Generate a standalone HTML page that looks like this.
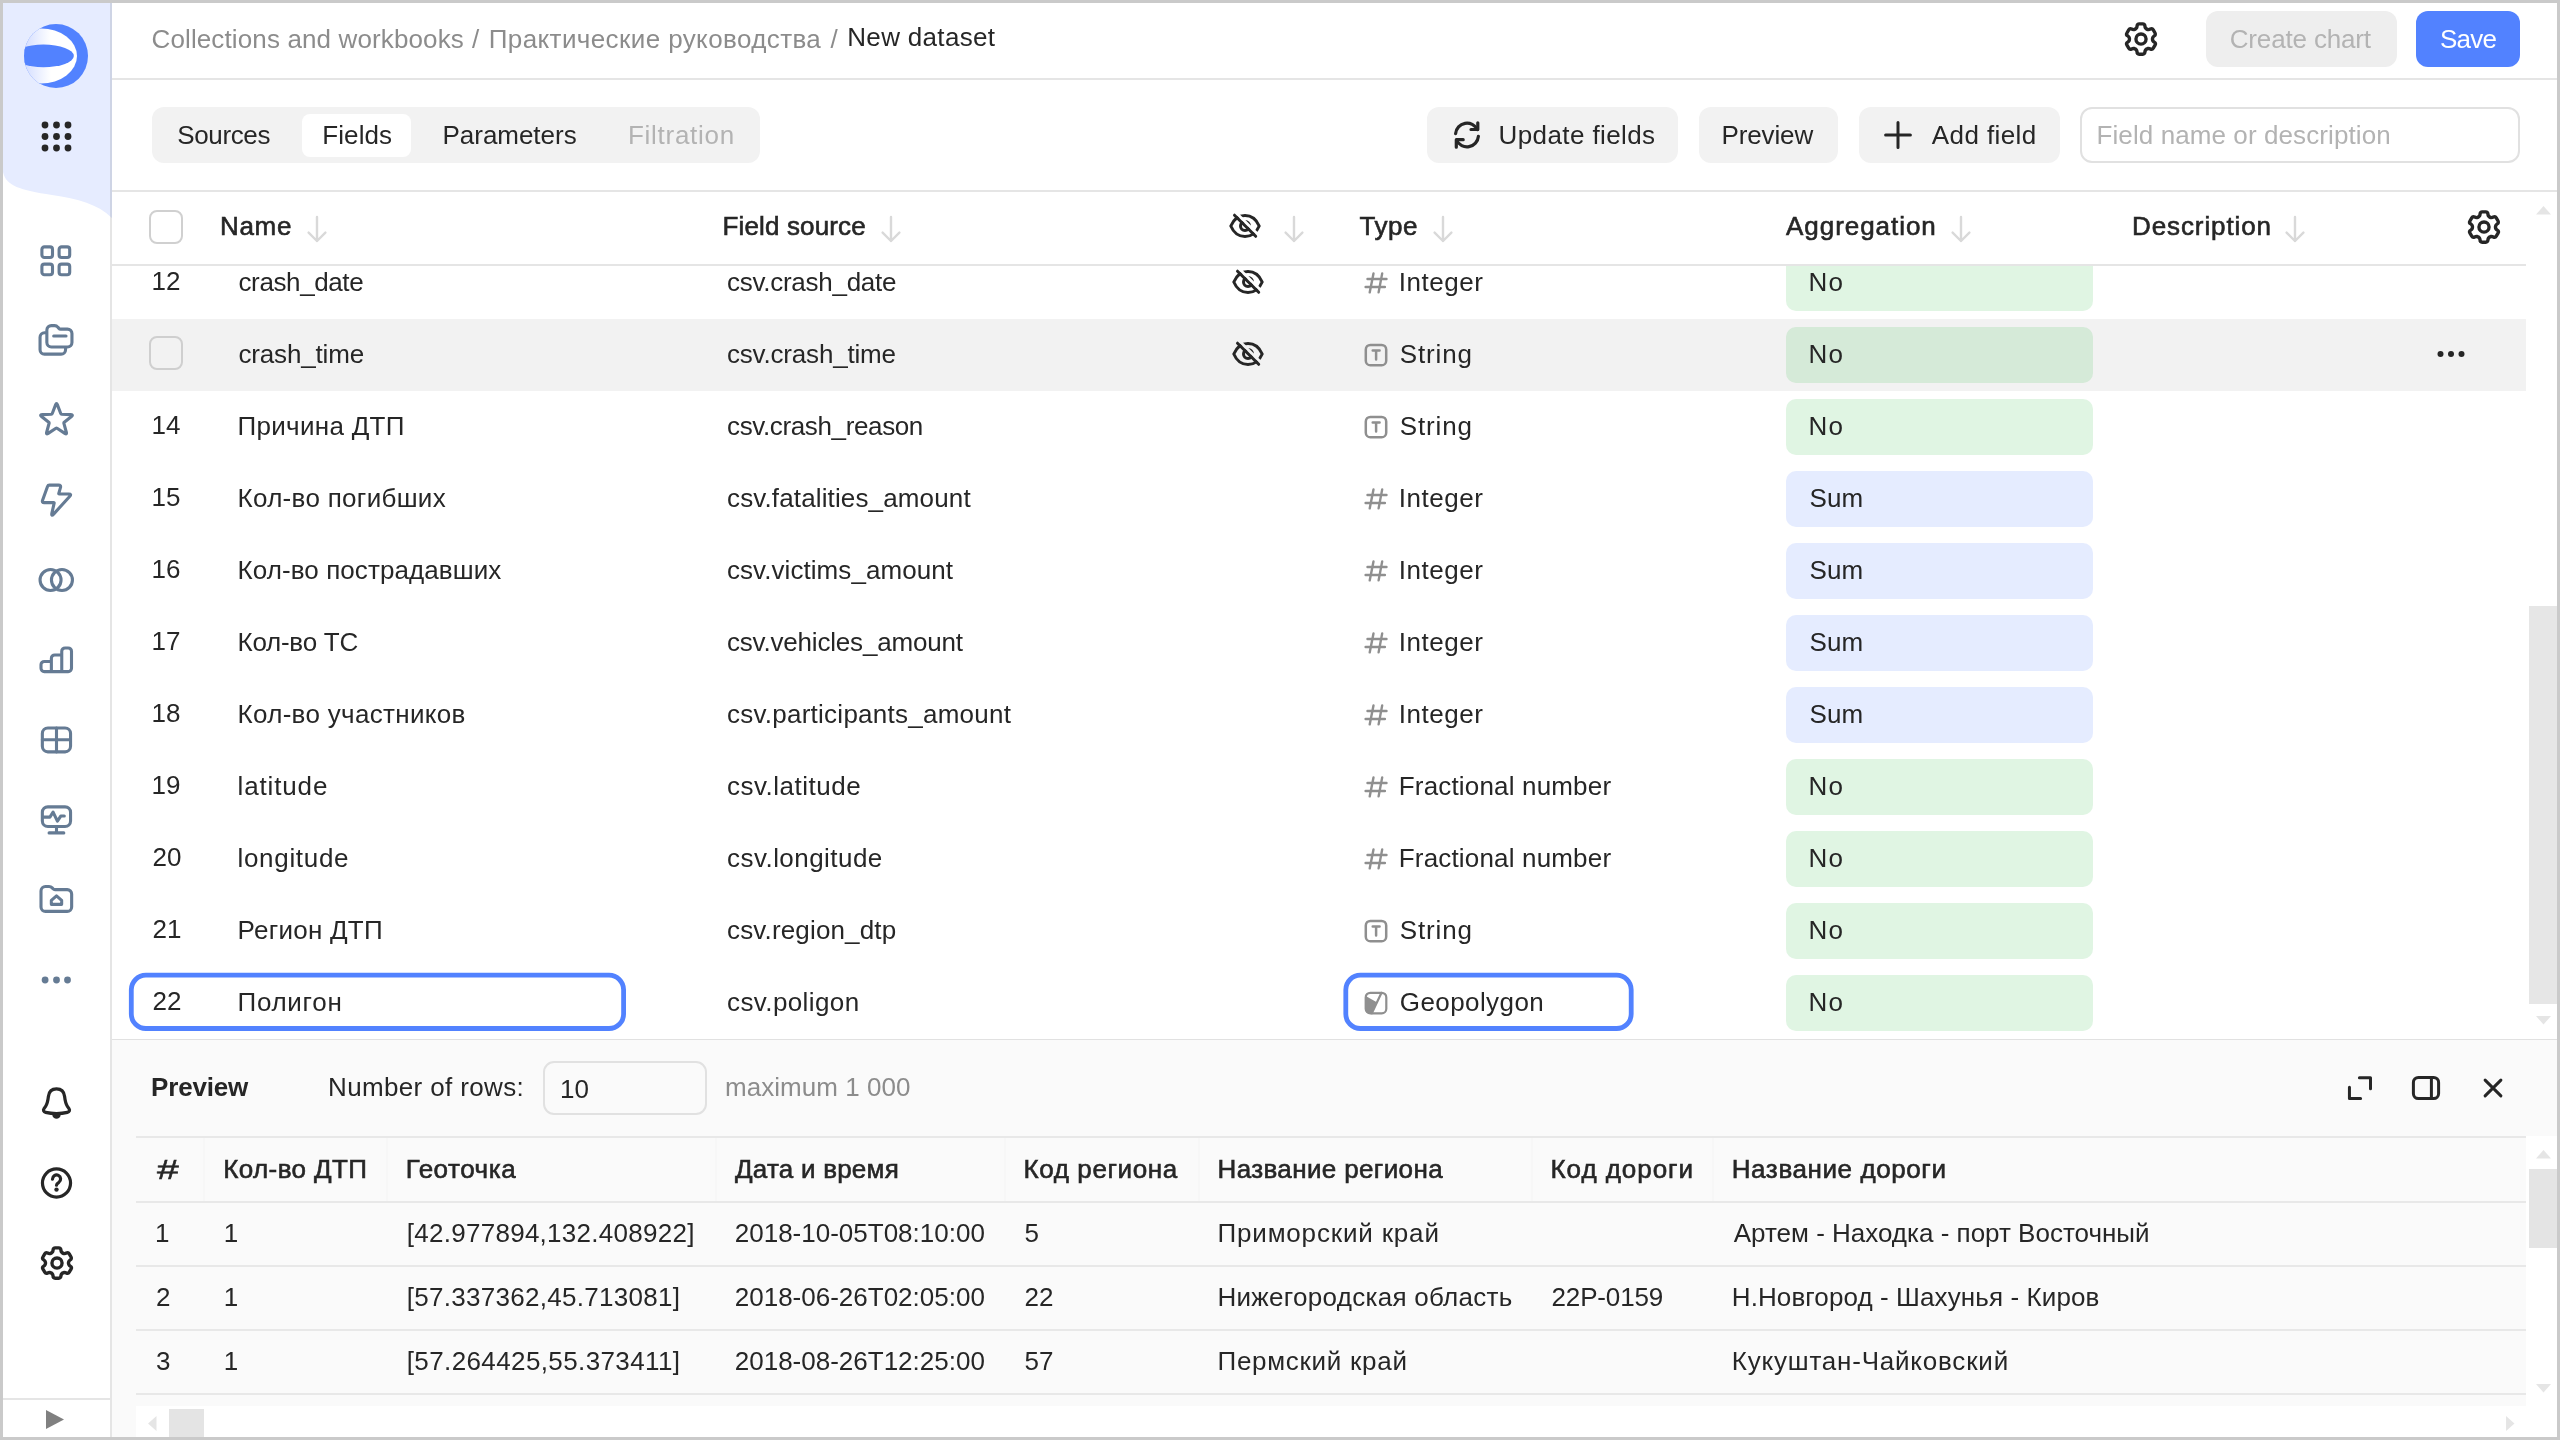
<!DOCTYPE html>
<html lang="en">
<head>
<meta charset="utf-8">
<title>New dataset</title>
<style>
html,body{margin:0;padding:0;}
body{width:2560px;height:1440px;position:relative;overflow:hidden;background:#fff;font-family:"Liberation Sans",sans-serif;font-size:26px;color:#262626;}
.t{position:absolute;white-space:pre;line-height:30px;font-size:26px;}
.abs{position:absolute;}
.ln{position:absolute;background:#e5e5e5;}
.btn{position:absolute;border-radius:12px;background:#f2f2f2;height:56px;top:107px;}
.ic{position:absolute;color:#262626;overflow:visible;}
.tic{color:#8f8f8f;}
.sic{position:absolute;left:40px;color:#6b8299;overflow:visible;}
.arr{position:absolute;top:213.400px;color:#d9d9d9;}
.cb{position:absolute;width:30px;height:30px;border:2px solid #d0d0d0;border-radius:8px;background:#fff;}
#tbody{will-change:transform;position:absolute;left:0;top:266px;width:2526px;height:773px;overflow:hidden;}
.hov{position:absolute;left:112px;width:2414px;height:72px;background:#f2f2f2;}
.pill{position:absolute;left:1786px;width:307px;height:56px;border-radius:10px;}
.pill.g{background:rgba(50,186,67,0.15);}
.pill.b{background:rgba(82,130,255,0.15);}
.focus{position:absolute;border:4px solid #5282ff;border-radius:14px;box-sizing:border-box;height:58px;top:973px;}
</style>
</head>
<body>
<svg width="0" height="0" style="position:absolute">
<defs>
<symbol id="i-gear" viewBox="0 0 16 16"><path fill="currentColor" fill-rule="evenodd" clip-rule="evenodd" d="M7.199 2H8.8a.2.2 0 0 1 .2.2c0 1.808 1.958 2.939 3.524 2.034a.199.199 0 0 1 .271.073l.802 1.388a.199.199 0 0 1-.073.272c-1.566.904-1.566 3.164 0 4.069a.199.199 0 0 1 .073.271l-.802 1.388a.199.199 0 0 1-.271.073C10.958 10.863 9 11.993 9 13.8a.2.2 0 0 1-.199.2H7.2a.199.199 0 0 1-.2-.2c0-1.808-1.958-2.938-3.524-2.034a.199.199 0 0 1-.272-.073l-.8-1.388a.199.199 0 0 1 .072-.271c1.566-.905 1.566-3.165 0-4.07a.199.199 0 0 1-.073-.271l.801-1.388a.199.199 0 0 1 .272-.073C5.042 5.138 7 4.007 7 2.2c0-.11.089-.199.199-.199ZM5.5 2.2c0-.94.76-1.7 1.699-1.7H8.8c.94 0 1.7.76 1.7 1.7a.85.85 0 0 0 1.274.735 1.699 1.699 0 0 1 2.32.622l.802 1.388c.469.813.19 1.851-.622 2.32a.85.85 0 0 0 0 1.472 1.7 1.7 0 0 1 .622 2.32l-.802 1.388a1.699 1.699 0 0 1-2.32.622.85.85 0 0 0-1.274.735c0 .939-.76 1.7-1.699 1.7H7.2a1.7 1.7 0 0 1-1.699-1.7.85.85 0 0 0-1.274-.735 1.698 1.698 0 0 1-2.32-.622l-.802-1.388a1.699 1.699 0 0 1 .622-2.32.85.85 0 0 0 0-1.471 1.699 1.699 0 0 1-.622-2.321l.801-1.388a1.699 1.699 0 0 1 2.32-.622A.85.85 0 0 0 5.5 2.2Zm4 5.8a1.5 1.5 0 1 1-3 0 1.5 1.5 0 0 1 3 0ZM11 8a3 3 0 1 1-6 0 3 3 0 0 1 6 0Z"/></symbol>
<symbol id="i-eyeslash" viewBox="0 0 16 16"><mask id="esm" maskUnits="userSpaceOnUse" x="-1" y="-1" width="18" height="18"><rect x="-1" y="-1" width="18" height="18" fill="#fff"/><path d="M1.800 -0.400 15.800 13.600" stroke="#000" stroke-width="1.400"/></mask><g fill="none" stroke="currentColor" stroke-width="1.500" stroke-linecap="butt" stroke-linejoin="round"><g mask="url(#esm)"><path d="M0.900 8C2.300 4.700 4.900 2.750 8 2.750S13.700 4.700 15.100 8C13.700 11.300 11.100 13.250 8 13.250S2.300 11.300 0.900 8Z"/><circle cx="8" cy="8" r="2.250"/></g><path d="M2.750 2.600 13.350 13.150" stroke-linecap="round"/></g></symbol>
<symbol id="i-dots" viewBox="0 0 16 16"><g fill="currentColor"><circle cx="2.75" cy="8" r="1.5"/><circle cx="8" cy="8" r="1.5"/><circle cx="13.25" cy="8" r="1.5"/></g></symbol>
<symbol id="i-arrow" viewBox="0 0 16 16"><path fill="none" stroke="currentColor" stroke-width="1.200" stroke-linecap="round" stroke-linejoin="round" d="M8 2V14M3.800 9.800 8 14 12.200 9.800"/></symbol>
<symbol id="t-int" viewBox="0 0 16 16"><path fill="none" stroke="currentColor" stroke-width="1.200" stroke-linecap="round" d="M6.750 3.200 4.850 12.700M11.100 3.200 9.300 12.700M3.750 6H13.250M2.800 10H12.450"/></symbol>
<symbol id="t-str" viewBox="0 0 16 16"><g fill="none" stroke="currentColor" stroke-width="1.250" stroke-linecap="round" stroke-linejoin="round"><rect x="2.900" y="2.950" width="10.200" height="10.200" rx="2.300"/><path d="M6.350 5.750H9.800M8.050 5.750V10.300"/></g></symbol>
<symbol id="t-geo" viewBox="0 0 16 16"><path d="M2.850 4.500 8.400 7.600 5.900 13.150H4.800Q2.850 13.150 2.850 11.200Z" fill="currentColor"/><g fill="none" stroke="currentColor" stroke-width="1.100" stroke-linecap="round"><rect x="2.850" y="2.900" width="10.300" height="10.300" rx="2.300"/><path d="M10.750 2.900 5.900 13.150"/></g></symbol>
</defs>
</svg>

<!-- ======== sidebar ======== -->
<div class="abs" id="aside" style="left:0;top:0;width:111px;height:1440px;background:#fff;"></div>
<svg class="abs" style="left:0;top:0" width="112" height="230" viewBox="0 0 112 230"><path d="M0 0H112V218C98 204 78 199 52 195 20 190 6 186 3 172V0Z" fill="#e6ecff"/></svg>
<div class="ln" style="left:110px;top:0;width:2px;height:1440px;background:rgba(0,0,0,0.1);"></div>
<!-- logo -->
<svg class="abs" style="left:24px;top:24px" width="64" height="64" viewBox="0 0 64 64">
<defs><linearGradient id="lg" gradientUnits="userSpaceOnUse" x1="0" y1="0" x2="27" y2="0"><stop offset="0" stop-color="#d3ddff"/><stop offset="1" stop-color="#ffffff"/></linearGradient><clipPath id="lc"><circle cx="32" cy="32" r="32"/></clipPath></defs>
<circle cx="32" cy="32" r="32" fill="#5282ff"/>
<g clip-path="url(#lc)"><ellipse cx="17" cy="32" rx="36" ry="27.500" fill="url(#lg)"/><ellipse cx="19.500" cy="31.900" rx="30.300" ry="11.300" fill="#5282ff"/></g>
</svg>
<!-- 9 dots -->
<svg class="abs" style="left:40px;top:120px" width="32" height="32" viewBox="0 0 32 32" fill="#262626"><circle cx="5" cy="5" r="3.400"/><circle cx="16.500" cy="5" r="3.400"/><circle cx="28" cy="5" r="3.400"/><circle cx="5" cy="16.500" r="3.400"/><circle cx="16.500" cy="16.500" r="3.400"/><circle cx="28" cy="16.500" r="3.400"/><circle cx="5" cy="28" r="3.400"/><circle cx="16.500" cy="28" r="3.400"/><circle cx="28" cy="28" r="3.400"/></svg>
<svg class="abs" style="left:38px;top:242.5px" width="36" height="36" viewBox="0 0 36 36" fill="none" stroke="#657b94" stroke-width="3.1" stroke-linecap="round" stroke-linejoin="round"><rect x="3.9" y="3.9" width="10.600" height="10.600" rx="2.500"/><rect x="3.9" y="21.1" width="10.600" height="10.600" rx="2.500"/><rect x="21.1" y="3.9" width="10.600" height="10.600" rx="2.500"/><rect x="21.1" y="21.1" width="10.600" height="10.600" rx="2.500"/></svg>
<svg class="abs" style="left:38px;top:321.5px" width="36" height="36" viewBox="0 0 36 36" fill="none" stroke="#657b94" stroke-width="3.1" stroke-linecap="round" stroke-linejoin="round"><path d="M8.850 20.500V8.150A4.500 4.500 0 0 1 13.350 3.650H16.600c1.300 0 2.400.500 3.200 1.500l.900 1c.500.600 1.200.950 2 .950H29.500A4.450 4.450 0 0 1 33.950 11.550V20.500A4.450 4.450 0 0 1 29.500 24.950H13.350A4.500 4.500 0 0 1 8.850 20.500Z"/><path d="M15.700 14H28"/><path d="M7.400 10.750H6.500A4.450 4.450 0 0 0 2.050 15.200V27.700A4.450 4.450 0 0 0 6.500 32.150H23.100A4.450 4.450 0 0 0 27.550 27.700V26.400"/></svg>
<svg class="abs" style="left:38px;top:400.5px" width="36" height="36" viewBox="0 0 36 36" fill="none" stroke="#657b94" stroke-width="3.1" stroke-linecap="round" stroke-linejoin="round"><path d="M17.57 3.86Q18.50 1.40 19.43 3.86L22.73 12.54Q22.97 13.15 23.62 13.18L32.90 13.64Q35.52 13.77 33.47 15.42L26.24 21.24Q25.73 21.65 25.90 22.28L28.33 31.24Q29.02 33.78 26.82 32.34L19.05 27.26Q18.50 26.90 17.95 27.26L10.18 32.34Q7.98 33.78 8.67 31.24L11.10 22.28Q11.27 21.65 10.76 21.24L3.53 15.42Q1.48 13.77 4.10 13.64L13.38 13.18Q14.03 13.15 14.27 12.54Z"/></svg>
<svg class="abs" style="left:38px;top:481.5px" width="36" height="36" viewBox="0 0 36 36" fill="none" stroke="#657b94" stroke-width="3.1" stroke-linecap="round" stroke-linejoin="round"><path d="M9.52 4.42Q10.00 3.10 11.41 3.10L20.53 3.10Q23.20 3.10 22.45 5.66L20.79 11.36Q20.60 12.00 21.27 12.00L30.87 12.00Q33.80 12.00 31.84 14.17L15.83 31.87Q13.00 35.00 13.94 30.89L16.16 21.21Q16.30 20.60 15.67 20.60L6.26 20.60Q3.70 20.60 4.57 18.19Z"/></svg>
<svg class="abs" style="left:38px;top:561.5px" width="36" height="36" viewBox="0 0 36 36" fill="none" stroke="#657b94" stroke-width="3.1" stroke-linecap="round" stroke-linejoin="round"><circle cx="12.550" cy="18" r="10.500"/><circle cx="23.950" cy="18" r="10.500"/></svg>
<svg class="abs" style="left:38px;top:641.5px" width="36" height="36" viewBox="0 0 36 36" fill="none" stroke="#657b94" stroke-width="3.1" stroke-linecap="round" stroke-linejoin="round"><path d="M23.750 29.650V9.250a3.300 3.300 0 0 1 3.300-3.300h3.150a3.300 3.300 0 0 1 3.300 3.300V26.350a3.300 3.300 0 0 1-3.300 3.300H6.300a3.300 3.300 0 0 1-3.300-3.300V22.770a3.300 3.300 0 0 1 3.300-3.300H13.370M13.370 29.650V16.270a3.300 3.300 0 0 1 3.300-3.300H23.750"/></svg>
<svg class="abs" style="left:38px;top:721.5px" width="36" height="36" viewBox="0 0 36 36" fill="none" stroke="#657b94" stroke-width="3.1" stroke-linecap="round" stroke-linejoin="round"><rect x="4.350" y="6.050" width="28.200" height="23.800" rx="5.500"/><path d="M18.500 6.050V29.850M4.350 17.800H32.550"/></svg>
<svg class="abs" style="left:38px;top:801.5px" width="36" height="36" viewBox="0 0 36 36" fill="none" stroke="#657b94" stroke-width="3.1" stroke-linecap="round" stroke-linejoin="round"><rect x="4.350" y="4.850" width="28.200" height="19.700" rx="5.500"/><path d="M18.500 24.550V30.900M11.100 30.900H25.800M5.600 15.130H11.900L15.080 10.170 19.400 19.200 22.750 14.050H26.300"/></svg>
<svg class="abs" style="left:38px;top:881px" width="36" height="36" viewBox="0 0 36 36" fill="none" stroke="#657b94" stroke-width="3.1" stroke-linecap="round" stroke-linejoin="round"><path d="M3 25.900V9.900A4.450 4.450 0 0 1 7.450 5.450H11c1.300 0 2.400.500 3.200 1.400l.800.900c.500.550 1.200.880 2 .880H29.200A4.450 4.450 0 0 1 33.650 13.080V25.900A4.450 4.450 0 0 1 29.200 30.350H7.450A4.450 4.450 0 0 1 3 25.900Z"/><path d="M13.350 23.350V19.400L18.500 14.900 23.650 19.400V23.350Z"/></svg>
<svg class="abs" style="left:38px;top:961.5px" width="36" height="36" viewBox="0 0 36 36" fill="#657b94"><circle cx="7.100" cy="18" r="3.400"/><circle cx="18.500" cy="18" r="3.400"/><circle cx="29.500" cy="18" r="3.400"/></svg>
<svg class="abs" style="left:38px;top:1084.5px" width="36" height="36" viewBox="0 0 36 36" fill="none" stroke="#262626" stroke-width="3.2" stroke-linecap="round" stroke-linejoin="round"><path d="M18.500 3.950C13.600 3.950 10.900 7.200 10.400 11.500 10 15 9.600 18.300 7.600 21.300L6 23.600C4.900 25.200 5.600 27 7.600 27.400 11 28.200 14.600 28.600 18.500 28.600 22.400 28.600 26 28.200 29.400 27.400 31.400 27 32.100 25.200 31 23.600L29.400 21.300C27.400 18.300 27 15 26.600 11.500 26.100 7.200 23.400 3.950 18.500 3.950Z"/><path d="M14.300 30H22.700C22.300 32.500 20.600 33.800 18.500 33.800 16.400 33.800 14.700 32.500 14.300 30Z" fill="#262626" stroke="none"/></svg>
<svg class="abs" style="left:38px;top:1164.7px" width="36" height="36" viewBox="0 0 36 36" fill="none" stroke="#262626" stroke-width="3.2" stroke-linecap="round" stroke-linejoin="round"><circle cx="18.500" cy="18" r="14.050"/><path d="M14.500 14.100A4.050 4.050 0 1 1 20.900 17.300C19.600 18.100 18.500 18.800 18.500 20.200"/><circle cx="18.500" cy="24.600" r="2.200" fill="#262626" stroke="none"/></svg>
<svg class="ic" style="left:38.5px;top:1244.7px" width="36" height="36" viewBox="0 0 16 16"><use href="#i-gear"/></svg>
<div class="ln" style="left:0;top:1398px;width:111px;height:2px;"></div>
<svg class="abs" style="left:45px;top:1409px" width="20" height="21" viewBox="0 0 20 21"><path d="M1 1 19 10.500 1 20Z" fill="#808080"/></svg>

<!-- ======== header ======== -->
<div class="ln" style="left:112px;top:78px;width:2448px;height:2px;"></div>
<svg class="ic" style="left:2123px;top:21px" width="36" height="36" viewBox="0 0 16 16"><use href="#i-gear"/></svg>
<div class="abs" style="left:2206px;top:11px;width:191px;height:56px;border-radius:12px;background:#eeeeee;"></div>
<div class="abs" style="left:2416px;top:11px;width:104px;height:56px;border-radius:12px;background:#5282ff;"></div>

<!-- ======== toolbar ======== -->
<div class="abs" style="left:152px;top:107px;width:608px;height:56px;border-radius:12px;background:#f2f2f2;"></div>
<div class="abs" style="left:302px;top:114px;width:109px;height:43px;border-radius:8px;background:#fff;"></div>
<div class="btn" style="left:1427px;width:251px;"></div>
<div class="btn" style="left:1699px;width:139px;"></div>
<div class="btn" style="left:1859px;width:201px;"></div>
<div class="abs" style="left:2080px;top:107px;width:436px;height:52px;border:2px solid #e1e1e1;border-radius:12px;"></div>
<svg class="ic" style="left:1451px;top:119px" width="32" height="32" viewBox="0 0 16 16"><g fill="none" stroke="currentColor" stroke-width="1.600" stroke-linecap="round" stroke-linejoin="round"><path d="M2.300 7.300A5.750 5.750 0 0 1 13.200 5.300M13.700 8.700A5.750 5.750 0 0 1 2.800 10.700"/><path d="M13.400 1.900V5.250H10M2.650 14.100V10.350H6.100"/></g></svg>
<svg class="ic" style="left:1882px;top:119px" width="32" height="32" viewBox="0 0 16 16"><path fill="none" stroke="currentColor" stroke-width="1.500" stroke-linecap="round" d="M8 1.800v12.400M1.800 8h12.400"/></svg>
<div class="ln" style="left:112px;top:190px;width:2448px;height:2px;"></div>

<!-- ======== table header ======== -->
<div class="cb" style="left:149px;top:210px;"></div>
<svg class="arr" style="left:301px" width="32" height="32" viewBox="0 0 16 16"><use href="#i-arrow"/></svg>
<svg class="arr" style="left:875px" width="32" height="32" viewBox="0 0 16 16"><use href="#i-arrow"/></svg>
<svg class="arr" style="left:1278px" width="32" height="32" viewBox="0 0 16 16"><use href="#i-arrow"/></svg>
<svg class="arr" style="left:1427px" width="32" height="32" viewBox="0 0 16 16"><use href="#i-arrow"/></svg>
<svg class="arr" style="left:1945px" width="32" height="32" viewBox="0 0 16 16"><use href="#i-arrow"/></svg>
<svg class="arr" style="left:2279px" width="32" height="32" viewBox="0 0 16 16"><use href="#i-arrow"/></svg>
<svg class="ic" style="left:1229px;top:210px" width="32" height="32" viewBox="0 0 16 16"><use href="#i-eyeslash"/></svg>
<svg class="ic" style="left:2465.500px;top:209px" width="36" height="36" viewBox="0 0 16 16"><use href="#i-gear"/></svg>
<div class="ln" style="left:112px;top:264px;width:2414px;height:2px;"></div>

<!-- ======== table body ======== -->
<div id="tbody">
<div class="pill g" style="top:-11px"></div>
<svg class="ic" style="left:1232px;top:0px" width="32" height="32" viewBox="0 0 16 16"><use href="#i-eyeslash"/></svg>
<svg class="ic tic" style="left:1359.5px;top:1px" width="32" height="32" viewBox="0 0 16 16"><use href="#t-int"/></svg>
<div class="hov" style="top:53px"></div>
<div class="cb" style="left:149px;top:70px;background:transparent;border-color:#cfcfcf"></div>
<svg class="ic" style="left:2435px;top:71.5px" width="32" height="32" viewBox="0 0 16 16"><use href="#i-dots"/></svg>
<div class="pill g" style="top:61px"></div>
<svg class="ic" style="left:1232px;top:72px" width="32" height="32" viewBox="0 0 16 16"><use href="#i-eyeslash"/></svg>
<svg class="ic tic" style="left:1359.5px;top:73px" width="32" height="32" viewBox="0 0 16 16"><use href="#t-str"/></svg>
<div class="pill g" style="top:133px"></div>
<svg class="ic tic" style="left:1359.5px;top:145px" width="32" height="32" viewBox="0 0 16 16"><use href="#t-str"/></svg>
<div class="pill b" style="top:205px"></div>
<svg class="ic tic" style="left:1359.5px;top:217px" width="32" height="32" viewBox="0 0 16 16"><use href="#t-int"/></svg>
<div class="pill b" style="top:277px"></div>
<svg class="ic tic" style="left:1359.5px;top:289px" width="32" height="32" viewBox="0 0 16 16"><use href="#t-int"/></svg>
<div class="pill b" style="top:349px"></div>
<svg class="ic tic" style="left:1359.5px;top:361px" width="32" height="32" viewBox="0 0 16 16"><use href="#t-int"/></svg>
<div class="pill b" style="top:421px"></div>
<svg class="ic tic" style="left:1359.5px;top:433px" width="32" height="32" viewBox="0 0 16 16"><use href="#t-int"/></svg>
<div class="pill g" style="top:493px"></div>
<svg class="ic tic" style="left:1359.5px;top:505px" width="32" height="32" viewBox="0 0 16 16"><use href="#t-int"/></svg>
<div class="pill g" style="top:565px"></div>
<svg class="ic tic" style="left:1359.5px;top:577px" width="32" height="32" viewBox="0 0 16 16"><use href="#t-int"/></svg>
<div class="pill g" style="top:637px"></div>
<svg class="ic tic" style="left:1359.5px;top:649px" width="32" height="32" viewBox="0 0 16 16"><use href="#t-str"/></svg>
<div class="pill g" style="top:709px"></div>
<svg class="ic tic" style="left:1359.5px;top:721px" width="32" height="32" viewBox="0 0 16 16"><use href="#t-geo"/></svg>
<span class="t" style="left:151.50px;top:0.00px;">12</span>
<span class="t" style="left:238.50px;top:0.50px;letter-spacing:-0.389px;">crash_date</span>
<span class="t" style="left:727.00px;top:0.50px;letter-spacing:-0.269px;">csv.crash_date</span>
<span class="t" style="left:1398.75px;top:0.50px;letter-spacing:0.542px;">Integer</span>
<span class="t" style="left:1808.50px;top:0.50px;letter-spacing:1.200px;">No</span>
<span class="t" style="left:238.50px;top:72.50px;letter-spacing:-0.167px;">crash_time</span>
<span class="t" style="left:727.00px;top:72.50px;letter-spacing:-0.192px;">csv.crash_time</span>
<span class="t" style="left:1399.75px;top:72.50px;letter-spacing:0.850px;">String</span>
<span class="t" style="left:1808.50px;top:72.50px;letter-spacing:1.200px;">No</span>
<span class="t" style="left:151.50px;top:144.00px;">14</span>
<span class="t" style="left:237.50px;top:144.50px;letter-spacing:0.300px;">Причина ДТП</span>
<span class="t" style="left:727.00px;top:144.50px;letter-spacing:-0.367px;">csv.crash_reason</span>
<span class="t" style="left:1399.75px;top:144.50px;letter-spacing:0.850px;">String</span>
<span class="t" style="left:1808.50px;top:144.50px;letter-spacing:1.200px;">No</span>
<span class="t" style="left:151.50px;top:216.00px;">15</span>
<span class="t" style="left:237.50px;top:216.50px;letter-spacing:0.304px;">Кол-во погибших</span>
<span class="t" style="left:727.00px;top:216.50px;letter-spacing:0.138px;">csv.fatalities_amount</span>
<span class="t" style="left:1398.75px;top:216.50px;letter-spacing:0.542px;">Integer</span>
<span class="t" style="left:1809.50px;top:216.50px;letter-spacing:0.125px;">Sum</span>
<span class="t" style="left:151.50px;top:288.00px;">16</span>
<span class="t" style="left:237.50px;top:288.50px;letter-spacing:0.083px;">Кол-во пострадавших</span>
<span class="t" style="left:727.00px;top:288.50px;letter-spacing:0.059px;">csv.victims_amount</span>
<span class="t" style="left:1398.75px;top:288.50px;letter-spacing:0.542px;">Integer</span>
<span class="t" style="left:1809.50px;top:288.50px;letter-spacing:0.125px;">Sum</span>
<span class="t" style="left:151.50px;top:360.00px;">17</span>
<span class="t" style="left:237.50px;top:360.50px;letter-spacing:-0.250px;">Кол-во ТС</span>
<span class="t" style="left:727.00px;top:360.50px;letter-spacing:-0.194px;">csv.vehicles_amount</span>
<span class="t" style="left:1398.75px;top:360.50px;letter-spacing:0.542px;">Integer</span>
<span class="t" style="left:1809.50px;top:360.50px;letter-spacing:0.125px;">Sum</span>
<span class="t" style="left:151.50px;top:432.00px;">18</span>
<span class="t" style="left:237.50px;top:432.50px;letter-spacing:0.312px;">Кол-во участников</span>
<span class="t" style="left:727.00px;top:432.50px;letter-spacing:0.250px;">csv.participants_amount</span>
<span class="t" style="left:1398.75px;top:432.50px;letter-spacing:0.542px;">Integer</span>
<span class="t" style="left:1809.50px;top:432.50px;letter-spacing:0.125px;">Sum</span>
<span class="t" style="left:151.50px;top:504.00px;">19</span>
<span class="t" style="left:237.50px;top:504.50px;letter-spacing:0.857px;">latitude</span>
<span class="t" style="left:727.00px;top:504.50px;letter-spacing:0.500px;">csv.latitude</span>
<span class="t" style="left:1398.75px;top:504.50px;letter-spacing:0.172px;">Fractional number</span>
<span class="t" style="left:1808.50px;top:504.50px;letter-spacing:1.200px;">No</span>
<span class="t" style="left:152.50px;top:576.00px;">20</span>
<span class="t" style="left:237.50px;top:576.50px;letter-spacing:0.688px;">longitude</span>
<span class="t" style="left:727.00px;top:576.50px;letter-spacing:0.458px;">csv.longitude</span>
<span class="t" style="left:1398.75px;top:576.50px;letter-spacing:0.172px;">Fractional number</span>
<span class="t" style="left:1808.50px;top:576.50px;letter-spacing:1.200px;">No</span>
<span class="t" style="left:152.50px;top:648.00px;">21</span>
<span class="t" style="left:237.50px;top:648.50px;letter-spacing:0.250px;">Регион ДТП</span>
<span class="t" style="left:727.00px;top:648.50px;letter-spacing:0.154px;">csv.region_dtp</span>
<span class="t" style="left:1399.75px;top:648.50px;letter-spacing:0.850px;">String</span>
<span class="t" style="left:1808.50px;top:648.50px;letter-spacing:1.200px;">No</span>
<span class="t" style="left:152.50px;top:720.00px;">22</span>
<span class="t" style="left:237.50px;top:720.50px;letter-spacing:0.708px;">Полигон</span>
<span class="t" style="left:727.00px;top:720.50px;letter-spacing:0.400px;">csv.poligon</span>
<span class="t" style="left:1399.75px;top:720.50px;letter-spacing:0.417px;">Geopolygon</span>
<span class="t" style="left:1808.50px;top:720.50px;letter-spacing:1.200px;">No</span>
</div>
<svg class="abs" style="left:0;top:960px" width="2560" height="80" viewBox="0 960 2560 80" fill="none" stroke="#5282ff" stroke-width="4.800"><rect x="131.300" y="975.200" width="492.300" height="53.300" rx="14.600"/><rect x="1345.800" y="975.200" width="285.400" height="53.300" rx="14.600"/></svg>
<!-- main scrollbar -->
<svg class="abs" style="left:2536px;top:206px" width="15" height="8.500" viewBox="0 0 16 9"><path d="M0 9 8 0 16 9Z" fill="#e5e5e5"/></svg>
<div class="abs" style="left:2529px;top:606px;width:28px;height:398px;background:#e6e6e6;"></div>
<svg class="abs" style="left:2536px;top:1016px" width="15" height="8.500" viewBox="0 0 16 9"><path d="M0 0 8 9 16 0Z" fill="#e5e5e5"/></svg>

<!-- ======== preview panel ======== -->
<div class="abs" style="left:112px;top:1040px;width:2448px;height:400px;background:#fafafa;"></div>
<div class="ln" style="left:112px;top:1039px;width:2448px;height:1px;background:#e1e1e1;"></div>
<div class="abs" style="left:543px;top:1061px;width:160px;height:50px;border:2px solid #e1e1e1;border-radius:11px;"></div>
<!-- preview icons -->
<svg class="ic" style="left:2344px;top:1072px" width="32" height="32" viewBox="0 0 16 16"><path fill="none" stroke="currentColor" stroke-width="1.500" stroke-linecap="round" stroke-linejoin="round" d="M7.700 2.850H13.250V8.400M8.300 13.200H2.720V7.650"/></svg>
<svg class="ic" style="left:2409.600px;top:1072px" width="32" height="32" viewBox="0 0 16 16"><g fill="none" stroke="currentColor" stroke-width="1.500" stroke-linejoin="round"><rect x="1.700" y="2.700" width="12.600" height="10.600" rx="2.500"/><path d="M10.700 2.700v10.600"/></g></svg>
<svg class="ic" style="left:2477px;top:1072px" width="32" height="32" viewBox="0 0 16 16"><path fill="none" stroke="currentColor" stroke-width="1.500" stroke-linecap="round" d="M4.050 4.050 11.950 11.950M11.950 4.050 4.050 11.950"/></svg>
<!-- preview table -->
<div class="abs" style="left:136px;top:1406px;width:2421px;height:31px;background:#fff;"></div>
<div class="abs" style="left:2526px;top:1136px;width:31px;height:301px;background:#fff;"></div>
<div class="ln" style="left:136px;top:1136px;width:2390px;height:2px;background:#e8e8e8"></div>
<div class="ln" style="left:136px;top:1201px;width:2390px;height:2px;background:#e8e8e8"></div>
<div class="ln" style="left:136px;top:1265px;width:2390px;height:2px;background:#e8e8e8"></div>
<div class="ln" style="left:136px;top:1329px;width:2390px;height:2px;background:#e8e8e8"></div>
<div class="ln" style="left:136px;top:1393px;width:2390px;height:2px;background:#e8e8e8"></div>
<div class="abs" style="left:203px;top:1138px;width:2px;height:63px;background:rgba(0,0,0,0.010);"></div><div class="abs" style="left:386px;top:1138px;width:2px;height:63px;background:rgba(0,0,0,0.010);"></div><div class="abs" style="left:715px;top:1138px;width:2px;height:63px;background:rgba(0,0,0,0.010);"></div><div class="abs" style="left:1004px;top:1138px;width:2px;height:63px;background:rgba(0,0,0,0.010);"></div><div class="abs" style="left:1198px;top:1138px;width:2px;height:63px;background:rgba(0,0,0,0.010);"></div><div class="abs" style="left:1531px;top:1138px;width:2px;height:63px;background:rgba(0,0,0,0.010);"></div><div class="abs" style="left:1712px;top:1138px;width:2px;height:63px;background:rgba(0,0,0,0.010);"></div>
<div class="abs" style="left:2529px;top:1169px;width:28px;height:79px;background:#e4e4e4;"></div>
<svg class="abs" style="left:2536px;top:1150px" width="15" height="8.500" viewBox="0 0 16 9"><path d="M0 9 8 0 16 9Z" fill="#e5e5e5"/></svg>
<svg class="abs" style="left:2536px;top:1384px" width="15" height="8.500" viewBox="0 0 16 9"><path d="M0 0 8 9 16 0Z" fill="#e5e5e5"/></svg>
<div class="abs" style="left:169px;top:1409px;width:35px;height:28px;background:#e4e4e4;"></div>
<svg class="abs" style="left:148px;top:1416px" width="8.500" height="15" viewBox="0 0 9 16"><path d="M9 0 0 8 9 16Z" fill="#e5e5e5"/></svg>
<svg class="abs" style="left:2506px;top:1416px" width="8.500" height="15" viewBox="0 0 9 16"><path d="M0 0 9 8 0 16Z" fill="#e5e5e5"/></svg>

<span class="t" style="left:156.500px;top:1154.800px;font-size:28px;transform:scaleX(1.400);transform-origin:0 0;-webkit-text-stroke:0.500px #262626;">#</span>
<div style="position:absolute;left:0;top:0;width:2560px;height:1440px;will-change:transform;">
<span class="t" style="left:151.50px;top:23.50px;color:#8c8c8c;letter-spacing:0.125px;">Collections and workbooks</span>
<span class="t" style="left:472.00px;top:23.50px;color:#8c8c8c;">/</span>
<span class="t" style="left:488.75px;top:23.50px;color:#8c8c8c;letter-spacing:0.391px;">Практические руководства</span>
<span class="t" style="left:830.50px;top:23.50px;color:#8c8c8c;">/</span>
<span class="t" style="left:847.25px;top:22.25px;letter-spacing:0.325px;">New dataset</span>
<span class="t" style="left:2229.75px;top:23.50px;color:#b3b3b3;letter-spacing:-0.159px;">Create chart</span>
<span class="t" style="left:2440.00px;top:23.50px;color:#ffffff;letter-spacing:-0.750px;">Save</span>
<span class="t" style="left:177.25px;top:119.75px;letter-spacing:-0.375px;">Sources</span>
<span class="t" style="left:322.25px;top:119.75px;letter-spacing:0.100px;">Fields</span>
<span class="t" style="left:442.50px;top:119.75px;letter-spacing:-0.028px;">Parameters</span>
<span class="t" style="left:628.00px;top:119.75px;color:#b3b3b3;letter-spacing:0.722px;">Filtration</span>
<span class="t" style="left:1498.60px;top:119.75px;letter-spacing:0.392px;">Update fields</span>
<span class="t" style="left:1721.50px;top:119.75px;letter-spacing:-0.133px;">Preview</span>
<span class="t" style="left:1931.80px;top:119.75px;letter-spacing:0.400px;">Add field</span>
<span class="t" style="left:2096.50px;top:119.75px;color:#b3b3b3;letter-spacing:0.094px;">Field name or description</span>
<span class="t" style="left:220.00px;top:211.00px;-webkit-text-stroke:0.6px #262626;letter-spacing:0.667px;">Name</span>
<span class="t" style="left:722.50px;top:211.00px;-webkit-text-stroke:0.6px #262626;letter-spacing:0.136px;">Field source</span>
<span class="t" style="left:1359.50px;top:211.00px;-webkit-text-stroke:0.6px #262626;letter-spacing:0.500px;">Type</span>
<span class="t" style="left:1786.00px;top:211.00px;-webkit-text-stroke:0.6px #262626;letter-spacing:0.960px;">Aggregation</span>
<span class="t" style="left:2132.00px;top:211.00px;-webkit-text-stroke:0.6px #262626;letter-spacing:0.900px;">Description</span>
<span class="t" style="left:151.00px;top:1072.00px;font-weight:700;letter-spacing:-0.167px;">Preview</span>
<span class="t" style="left:328.00px;top:1072.00px;letter-spacing:0.357px;">Number of rows:</span>
<span class="t" style="left:560.00px;top:1073.50px;">10</span>
<span class="t" style="left:725.00px;top:1072.00px;color:#8c8c8c;letter-spacing:0.042px;">maximum 1 000</span>
<span class="t" style="left:223.25px;top:1154.00px;-webkit-text-stroke:0.6px #262626;letter-spacing:0.389px;">Кол-во ДТП</span>
<span class="t" style="left:405.75px;top:1154.00px;-webkit-text-stroke:0.6px #262626;letter-spacing:0.536px;">Геоточка</span>
<span class="t" style="left:735.00px;top:1154.00px;-webkit-text-stroke:0.6px #262626;letter-spacing:0.227px;">Дата и время</span>
<span class="t" style="left:1023.50px;top:1154.00px;-webkit-text-stroke:0.6px #262626;letter-spacing:0.600px;">Код региона</span>
<span class="t" style="left:1217.50px;top:1154.00px;-webkit-text-stroke:0.6px #262626;letter-spacing:0.367px;">Название региона</span>
<span class="t" style="left:1550.50px;top:1154.00px;-webkit-text-stroke:0.6px #262626;letter-spacing:0.944px;">Код дороги</span>
<span class="t" style="left:1731.75px;top:1154.00px;-webkit-text-stroke:0.6px #262626;letter-spacing:0.589px;">Название дороги</span>
<span class="t" style="left:155.00px;top:1218.00px;">1</span>
<span class="t" style="left:223.75px;top:1218.00px;">1</span>
<span class="t" style="left:406.75px;top:1218.00px;letter-spacing:0.274px;">[42.977894,132.408922]</span>
<span class="t" style="left:734.75px;top:1218.00px;">2018-10-05T08:10:00</span>
<span class="t" style="left:1024.50px;top:1218.00px;">5</span>
<span class="t" style="left:1217.50px;top:1218.00px;letter-spacing:0.821px;">Приморский край</span>
<span class="t" style="left:1733.75px;top:1218.00px;">Артем - Находка - порт Восточный</span>
<span class="t" style="left:156.00px;top:1282.00px;">2</span>
<span class="t" style="left:223.75px;top:1282.00px;">1</span>
<span class="t" style="left:406.75px;top:1282.00px;letter-spacing:0.287px;">[57.337362,45.713081]</span>
<span class="t" style="left:734.75px;top:1282.00px;">2018-06-26T02:05:00</span>
<span class="t" style="left:1024.50px;top:1282.00px;">22</span>
<span class="t" style="left:1217.50px;top:1282.00px;letter-spacing:0.287px;">Нижегородская область</span>
<span class="t" style="left:1551.50px;top:1282.00px;letter-spacing:-0.143px;">22Р-0159</span>
<span class="t" style="left:1731.75px;top:1282.00px;letter-spacing:0.102px;">Н.Новгород - Шахунья - Киров</span>
<span class="t" style="left:156.00px;top:1346.00px;">3</span>
<span class="t" style="left:223.75px;top:1346.00px;">1</span>
<span class="t" style="left:406.75px;top:1346.00px;letter-spacing:0.388px;">[57.264425,55.373411]</span>
<span class="t" style="left:734.75px;top:1346.00px;">2018-08-26T12:25:00</span>
<span class="t" style="left:1024.50px;top:1346.00px;">57</span>
<span class="t" style="left:1217.50px;top:1346.00px;letter-spacing:0.708px;">Пермский край</span>
<span class="t" style="left:1731.75px;top:1346.00px;letter-spacing:0.792px;">Кукуштан-Чайковский</span>
</div>

<!-- ======== frame ======== -->
<div class="abs" style="left:0;top:0;width:2554px;height:1434px;border:3px solid #cacaca;pointer-events:none;"></div>
</body>
</html>
